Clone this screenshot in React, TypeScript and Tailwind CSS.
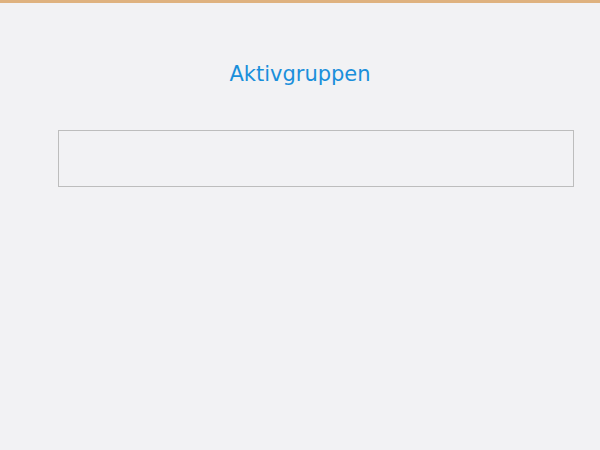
export default function App() {
  return (
    <div className="min-h-[450px] w-full bg-[#f2f2f4]" style={{ fontFamily: '"DejaVu Sans", sans-serif' }}>
      <div className="h-[3px] bg-[#dfb27f]" />
      <div className="flex flex-col">
        <h1 className="mt-[58px] text-center text-[21px] leading-[26px] text-[#1a8fdb]">Aktivgruppen</h1>
        <div className="ml-[58px] mt-[43px] h-[57px] w-[516px] border border-[#bdbdbd] bg-[#f2f2f4]" />
      </div>
    </div>
  );
}
